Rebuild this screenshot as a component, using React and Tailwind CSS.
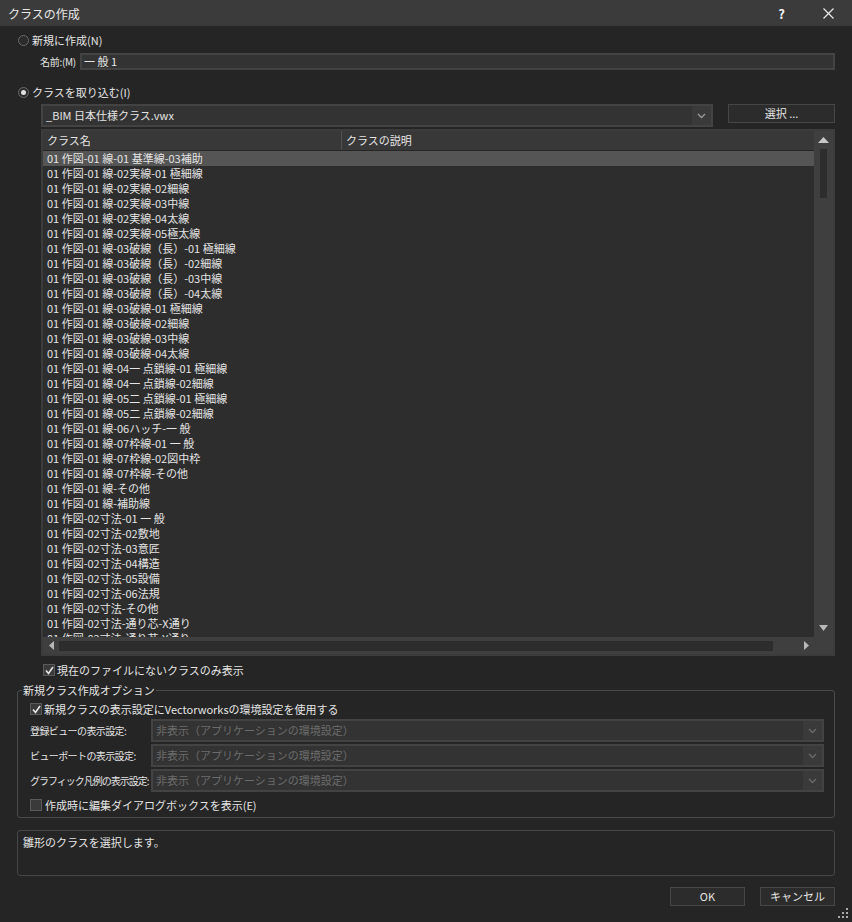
import React from 'react';

const rows = [
  '01 作図-01 線-01 基準線-03補助',
  '01 作図-01 線-02実線-01 極細線',
  '01 作図-01 線-02実線-02細線',
  '01 作図-01 線-02実線-03中線',
  '01 作図-01 線-02実線-04太線',
  '01 作図-01 線-02実線-05極太線',
  '01 作図-01 線-03破線（長）-01 極細線',
  '01 作図-01 線-03破線（長）-02細線',
  '01 作図-01 線-03破線（長）-03中線',
  '01 作図-01 線-03破線（長）-04太線',
  '01 作図-01 線-03破線-01 極細線',
  '01 作図-01 線-03破線-02細線',
  '01 作図-01 線-03破線-03中線',
  '01 作図-01 線-03破線-04太線',
  '01 作図-01 線-04一 点鎖線-01 極細線',
  '01 作図-01 線-04一 点鎖線-02細線',
  '01 作図-01 線-05二 点鎖線-01 極細線',
  '01 作図-01 線-05二 点鎖線-02細線',
  '01 作図-01 線-06ハッチ-一 般',
  '01 作図-01 線-07枠線-01 一 般',
  '01 作図-01 線-07枠線-02図中枠',
  '01 作図-01 線-07枠線-その他',
  '01 作図-01 線-その他',
  '01 作図-01 線-補助線',
  '01 作図-02寸法-01 一 般',
  '01 作図-02寸法-02敷地',
  '01 作図-02寸法-03意匠',
  '01 作図-02寸法-04構造',
  '01 作図-02寸法-05設備',
  '01 作図-02寸法-06法規',
  '01 作図-02寸法-その他',
  '01 作図-02寸法-通り芯-X通り',
  '01 作図-02寸法-通り芯-Y通り',
];

const Radio = ({ checked }) => (
  <div className="w-[11px] h-[11px] shrink-0 rounded-full border border-[#6a6a6a] bg-[#2b2b2b] flex items-center justify-center">
    {checked && <div className="w-[5px] h-[5px] rounded-full bg-[#e0e0e0]" />}
  </div>
);

const Check = ({ checked }) => (
  <div className="w-[12px] h-[12px] shrink-0 border border-[#5a5a5a] bg-[#3a3a3a] flex items-center justify-center">
    {checked && (
      <svg width="9" height="9" viewBox="0 0 9 9">
        <path d="M1 4.5 L3.5 7.5 L8 1" stroke="#e8e8e8" strokeWidth="1.6" fill="none" />
      </svg>
    )}
  </div>
);

const Chevron = ({ color = '#9a9a9a' }) => (
  <svg width="9" height="6" viewBox="0 0 9 6">
    <path d="M1 1 L4.5 4.5 L8 1" stroke={color} strokeWidth="1.3" fill="none" />
  </svg>
);

const Combo = ({ text, disabled, className }) => (
  <div className={`h-[23px] border-2 border-[#434343] bg-[#333333] flex items-stretch ${className}`}>
    <div className={`flex-1 flex items-center pl-[3px] whitespace-nowrap ${disabled ? 'text-[#6c6c6c]' : 'text-[#e4e4e4]'}`}>{text}</div>
    <div className="w-[19px] bg-[#3a3a3a] flex items-center justify-center">
      <Chevron color={disabled ? '#6a6a6a' : '#9a9a9a'} />
    </div>
  </div>
);

const Btn = ({ children, className }) => (
  <div className={`h-[19px] border border-[#464646] bg-[#2c2c2c] flex items-center justify-center text-[#e4e4e4] whitespace-nowrap ${className}`}>
    {children}
  </div>
);

export default function App() {
  return (
    <div className="w-[852px] h-[922px] bg-[#252525] text-[#e4e4e4] text-[11px] leading-[13px] font-['Noto_Sans_CJK_JP',sans-serif] flex flex-col overflow-hidden whitespace-nowrap">
      {/* title bar */}
      <div className="h-[26px] bg-[#3b3b3b] flex items-center pl-[8px] pr-[18px] shrink-0">
        <span className="text-[12px] text-[#e8e8e8]">クラスの作成</span>
        <span className="ml-auto text-[13px] font-bold text-[#f0f0f0] mr-[38px]">?</span>
        <svg width="11" height="11" viewBox="0 0 11 11">
          <path d="M0.5 0.5 L10.5 10.5 M10.5 0.5 L0.5 10.5" stroke="#e8e8e8" strokeWidth="1.2" />
        </svg>
      </div>

      <div className="flex flex-col pl-[17px] pr-[17px]">
        {/* new */}
        <div className="mt-[9px] h-[11px] flex items-center gap-[3px] pl-[1px]">
          <Radio />
          <span className="-mt-[1px]">新規に作成(N)</span>
        </div>
        <div className="mt-[7px] h-[17px] flex items-center pl-[23px]">
          <span className="w-[40px] shrink-0 text-[10px] tracking-[-0.3px]">名前:(M)</span>
          <div className="flex-1 h-[17px] border-2 border-[#434343] bg-[#333333] flex items-center pl-[2px]">一 般 1</div>
        </div>

        {/* import */}
        <div className="mt-[17px] h-[11px] flex items-center gap-[3px] pl-[1px]">
          <Radio checked />
          <span className="-mt-[1px]">クラスを取り込む(I)</span>
        </div>
        <div className="mt-[6px] ml-[24px] flex items-start">
          <Combo text="_BIM 日本仕様クラス.vwx" className="w-[672px]" />
          <Btn className="ml-auto w-[107px] h-[19px]">選択 ...</Btn>
        </div>

        {/* list */}
        <div className="mt-[2px] ml-[24px] h-[527px] border-2 border-[#3c3c3c] flex flex-col">
          <div className="flex-1 min-h-0 flex">
            <div className="flex-1 flex flex-col bg-[#2d2d2d] min-w-0">
              <div className="h-[20px] bg-[#383838] border-b border-[#262626] flex items-center shrink-0">
                <div className="w-[299px] h-full flex items-center pl-[4px] border-r border-[#505050]">クラス名</div>
                <div className="pl-[4px]">クラスの説明</div>
              </div>
              <div className="flex-1 overflow-hidden">
                {rows.map((r, i) => (
                  <div key={i} className={`h-[15px] flex items-center pl-[4px] ${i === 0 ? 'bg-[#555555]' : ''}`}>
                    <span className="-mt-[1px]">{r}</span>
                  </div>
                ))}
              </div>
            </div>
            <div className="w-[19px] bg-[#3f3f3f] flex flex-col items-center shrink-0">
              <svg className="mt-[6px]" width="11" height="6" viewBox="0 0 11 6">
                <path d="M0 6 L5.5 0 L11 6 Z" fill="#c8c8c8" />
              </svg>
              <div className="mt-[6px] w-[7px] h-[49px] bg-[#2d2d2d]" />
              <svg className="mt-auto mb-[6px]" width="9" height="6" viewBox="0 0 9 6">
                <path d="M0 0 L4.5 6 L9 0 Z" fill="#b8b8b8" />
              </svg>
            </div>
          </div>
          <div className="h-[17px] bg-[#3f3f3f] flex items-center shrink-0 pl-[6px] pr-[24px]">
            <svg width="5" height="9" viewBox="0 0 5 9">
              <path d="M5 0 L0 4.5 L5 9 Z" fill="#b8b8b8" />
            </svg>
            <div className="ml-[5px] w-[714px] h-[10px] bg-[#2d2d2d]" />
            <svg className="ml-auto" width="5" height="9" viewBox="0 0 5 9">
              <path d="M0 0 L5 4.5 L0 9 Z" fill="#b8b8b8" />
            </svg>
          </div>
        </div>

        <div className="mt-[8px] ml-[26px] h-[12px] flex items-center gap-[2px]">
          <Check checked />
          <span>現在のファイルにないクラスのみ表示</span>
        </div>

        {/* options group */}
        <div className="relative mt-[14px] h-[128px] border border-[#4a4a4a] rounded-[3px] pt-[12px] pl-[12px] pr-[10px]">
          <span className="absolute -top-[7px] left-[4px] bg-[#252525] px-[1px] leading-[12px]">新規クラス作成オプション</span>
          <div className="h-[12px] flex items-center gap-[2px]">
            <Check checked />
            <span>新規クラスの表示設定にVectorworksの環境設定を使用する</span>
          </div>
          <div className="mt-[4px] flex items-center">
            <span className="w-[121px] shrink-0 text-[10px] tracking-[-0.6px]">登録ビューの表示設定:</span>
            <Combo text="非表示（アプリケーションの環境設定）" disabled className="flex-1" />
          </div>
          <div className="mt-[2px] flex items-center">
            <span className="w-[121px] shrink-0 text-[10px] tracking-[-0.6px]">ビューポートの表示設定:</span>
            <Combo text="非表示（アプリケーションの環境設定）" disabled className="flex-1" />
          </div>
          <div className="mt-[2px] flex items-center">
            <span className="w-[121px] shrink-0 text-[10px] tracking-[-1px]">グラフィック凡例の表示設定:</span>
            <Combo text="非表示（アプリケーションの環境設定）" disabled className="flex-1" />
          </div>
          <div className="mt-[7px] h-[12px] flex items-center gap-[3px]">
            <Check />
            <span>作成時に編集ダイアログボックスを表示(E)</span>
          </div>
        </div>

        {/* description */}
        <div className="mt-[12px] h-[46px] border border-[#464646] rounded-[3px] pl-[5px] pt-[5px]">
          雛形のクラスを選択します。
        </div>

        <div className="mt-[11px] flex justify-end gap-[15px]">
          <Btn className="w-[75px]">OK</Btn>
          <Btn className="w-[75px]">キャンセル</Btn>
        </div>
      </div>
      <div className="flex justify-end pr-[4px] mt-[2px]">
        <svg width="10" height="10" viewBox="0 0 10 10">
          <rect x="8" y="0" width="2" height="2" fill="#aaa" />
          <rect x="4" y="4" width="2" height="2" fill="#aaa" />
          <rect x="8" y="4" width="2" height="2" fill="#aaa" />
          <rect x="0" y="8" width="2" height="2" fill="#aaa" />
          <rect x="4" y="8" width="2" height="2" fill="#aaa" />
          <rect x="8" y="8" width="2" height="2" fill="#aaa" />
        </svg>
      </div>
    </div>
  );
}
